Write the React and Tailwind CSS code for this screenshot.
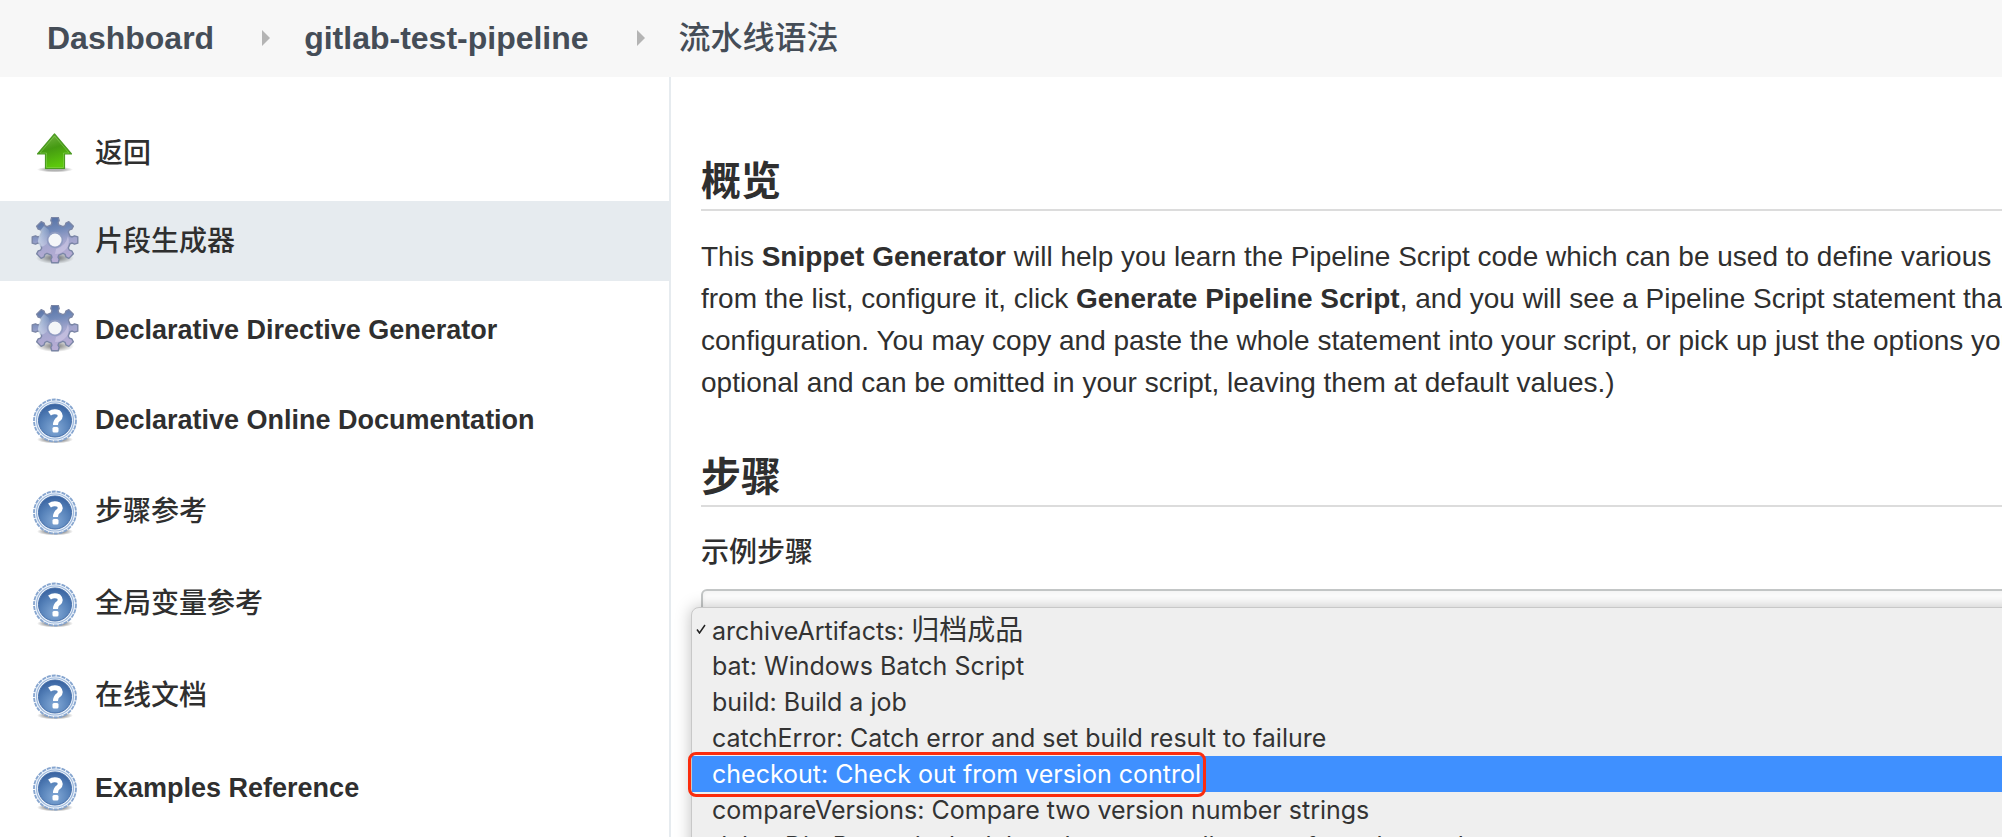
import { useState } from "react";
import clsx from "clsx";

const GEAR_POINTS = Array.from({ length: 8 })
  .flatMap((_, i) =>
    [
      [15.5, -14],
      [17.5, -10],
      [20, -12],
      [23, -8],
      [23, 8],
      [20, 12],
      [17.5, 10],
      [15.5, 14],
    ].map(([r, deg]) => {
      const a = ((i * 45 + deg) * Math.PI) / 180;
      return `${(24 + r * Math.sin(a)).toFixed(2)},${(23 - r * Math.cos(a)).toFixed(2)}`;
    }),
  )
  .join(" L");

const UpIcon = () => (
  <svg viewBox="0 0 48 48" className="size-12 shrink-0" aria-hidden="true">
    <defs>
      <linearGradient id="up-fill" x1="0" y1="0" x2="0.3" y2="1">
        <stop offset="0" stopColor="#7cb84c" />
        <stop offset="0.5" stopColor="#459a12" />
        <stop offset="1" stopColor="#5cc80c" />
      </linearGradient>
      <radialGradient id="up-shadow">
        <stop offset="0.5" stopColor="#000" stopOpacity="0.3" />
        <stop offset="1" stopColor="#000" stopOpacity="0" />
      </radialGradient>
    </defs>
    <ellipse cx="24" cy="40.500" rx="18" ry="3" fill="url(#up-shadow)" />
    <path
      d="M23.500 5 L40.500 25 H33.500 V39.500 H14.500 V25 H6.500 Z"
      fill="url(#up-fill)"
      stroke="#4b9a22"
      strokeWidth="1.200"
      strokeLinejoin="round"
    />
    <path
      d="M23.500 7 L38 24 H32.500 V38.500 H15.500 V24 H9 Z"
      fill="none"
      stroke="#8ed65c"
      strokeOpacity="0.5"
    />
  </svg>
);

const GearIcon = () => (
  <svg viewBox="0 0 48 48" className="size-12 shrink-0" aria-hidden="true">
    <defs>
      <linearGradient id="gear-fill" x1="0.4" y1="0" x2="0.6" y2="1">
        <stop offset="0" stopColor="#5671a4" />
        <stop offset="0.28" stopColor="#7189b8" />
        <stop offset="0.55" stopColor="#a3a6ce" />
        <stop offset="1" stopColor="#bcaed6" />
      </linearGradient>
      <linearGradient id="gear-shine" x1="0" y1="0" x2="1" y2="0">
        <stop offset="0" stopColor="#d3e0f0" stopOpacity="0.75" />
        <stop offset="1" stopColor="#d3e0f0" stopOpacity="0.1" />
      </linearGradient>
      <radialGradient id="gear-shadow">
        <stop offset="0.3" stopColor="#000" stopOpacity="0.4" />
        <stop offset="1" stopColor="#000" stopOpacity="0" />
      </radialGradient>
    </defs>
    <ellipse cx="24" cy="41" rx="19" ry="6" fill="url(#gear-shadow)" />
    <path
      d={`M${GEAR_POINTS} Z`}
      fill="url(#gear-fill)"
      stroke="#7b86a6"
      strokeWidth="1.400"
      strokeLinejoin="round"
    />
    <path
      d="M9 14 L13 9 L18 13 Q20 20 16.500 26 Q12 31 8 29 L7 24 Z"
      fill="url(#gear-shine)"
    />
    <path
      d="M25 32 Q35 29 37 19 Q39 25 36 31 Q31 37 24 37 Z"
      fill="#dcd5ee"
      fillOpacity="0.45"
    />
    <circle cx="24" cy="23" r="7.500" fill="none" stroke="#8f9cc0" strokeWidth="1.500" />
    <circle cx="24" cy="23" r="6.500" fill="#f4f6f8" />
  </svg>
);

const HelpIcon = () => (
  <svg viewBox="0 -3 48 48" className="size-12 shrink-0" aria-hidden="true">
    <defs>
      <radialGradient id="help-fill" cx="0.5" cy="0.75" r="0.75">
        <stop offset="0" stopColor="#83a9d6" />
        <stop offset="0.6" stopColor="#5480b8" />
        <stop offset="1" stopColor="#37619f" />
      </radialGradient>
      <radialGradient id="help-shadow">
        <stop offset="0.4" stopColor="#000" stopOpacity="0.5" />
        <stop offset="1" stopColor="#000" stopOpacity="0" />
      </radialGradient>
    </defs>
    <ellipse cx="24" cy="41.500" rx="18" ry="4" fill="url(#help-shadow)" />
    <circle cx="24" cy="22.500" r="21" fill="#eef4fb" stroke="#86a5cf" strokeWidth="1.800" strokeDasharray="4 1" />
    <circle cx="24" cy="22.500" r="18.500" fill="none" stroke="#9db8dc" strokeWidth="1.200" />
    <circle cx="24" cy="22.500" r="16.500" fill="url(#help-fill)" stroke="#466fa9" strokeWidth="1" />
    <path
      d="M18.500 15.500 Q23 12.500 27.500 14.500 Q31 18 27.500 21 Q24.500 23 24.500 27"
      fill="none"
      stroke="#fff"
      strokeWidth="5"
    />
    <rect x="21.500" y="29" width="6" height="5.500" rx="1.500" fill="#fff" />
  </svg>
);

const Chevron = () => (
  <svg viewBox="0 0 8 16" className="mr-[34px] ml-12 h-4 w-2 shrink-0" aria-hidden="true">
    <path d="M0 0 L8 8 L0 16 Z" fill="#b4b4b4" />
  </svg>
);

const tasks = [
  { label: "返回", icon: UpIcon, zh: true },
  { label: "片段生成器", icon: GearIcon, zh: true, active: true },
  { label: "Declarative Directive Generator", icon: GearIcon },
  { label: "Declarative Online Documentation", icon: HelpIcon, help: true },
  { label: "步骤参考", icon: HelpIcon, zh: true, help: true },
  { label: "全局变量参考", icon: HelpIcon, zh: true, help: true },
  { label: "在线文档", icon: HelpIcon, zh: true, help: true },
  { label: "Examples Reference", icon: HelpIcon, help: true },
];

const steps = [
  { name: "archiveArtifacts", text: "归档成品", zh: true },
  { name: "bat", text: "Windows Batch Script" },
  { name: "build", text: "Build a job" },
  { name: "catchError", text: "Catch error and set build result to failure" },
  { name: "checkout", text: "Check out from version control", marked: true },
  { name: "compareVersions", text: "Compare two version number strings" },
  {
    name: "deleteDir",
    text: "Recursively delete the current directory from the workspace",
  },
];

const Breadcrumbs = () => (
  <nav className="flex h-[77px] shrink-0 items-center bg-[#f7f7f7] px-[47px] pb-0.5 text-[32px] font-bold text-[#454d57]">
    <a href="#dashboard">Dashboard</a>
    <Chevron />
    <a href="#job">gitlab-test-pipeline</a>
    <Chevron />
    <a href="#syntax" className="font-medium">
      流水线语法
    </a>
  </nav>
);

const SidePanel = () => (
  <aside className="w-[671px] shrink-0 border-r-2 border-[#e6ebef] pt-9">
    <ul className="flex flex-col gap-2">
      {tasks.map(({ label, icon: Icon, zh, active, help }) => (
        <li key={label}>
          <a
            href="#task"
            className={clsx(
              "flex items-center gap-4 pl-[31px]",
              help ? "h-[84px]" : "h-20",
              active && "bg-[#e6ebef]",
            )}
          >
            <Icon />
            <span className={clsx("pt-0.5", zh ? "text-[28px] font-medium" : "text-[27px] font-bold")}>
              {label}
            </span>
          </a>
        </li>
      ))}
    </ul>
  </aside>
);

const SectionTitle = ({ children }) => (
  <h2 className="border-b-2 border-[#dcdcdc] pt-0.5 pb-0.5 text-[40px] leading-[52px] font-bold">
    {children}
  </h2>
);

const StepSelect = () => {
  const [selected, setSelected] = useState(0);
  const [hovered, setHovered] = useState(4);

  return (
    <div className="relative -mr-8 mt-4">
      <select
        id="step"
        value={selected}
        onChange={(e) => setSelected(Number(e.target.value))}
        className="h-16 w-full appearance-none rounded-md border-2 border-[#c3c6c6] bg-white px-3 text-transparent shadow-inner"
      >
        {steps.map((step, i) => (
          <option key={step.name} value={i}>
            {step.name}: {step.text}
          </option>
        ))}
      </select>
      <ul
        role="listbox"
        aria-label="示例步骤"
        className="absolute top-[18px] right-0 -left-[10px] rounded-tl-lg border border-[#c8c8c8] bg-[#efefef] py-1 font-['Inter','Noto_Sans_CJK_SC',sans-serif] text-[25px] leading-9 text-[#333] shadow-[0_0_16px_rgba(0,0,0,0.25)]"
      >
        {steps.map((step, i) => (
          <li
            key={step.name}
            role="option"
            aria-selected={i === selected}
            onMouseEnter={() => setHovered(i)}
            onClick={() => setSelected(i)}
            className={clsx(
              "relative h-9 pl-5 whitespace-nowrap",
              i === hovered && "bg-[#3f90ff] text-white",
            )}
          >
            {i === selected && (
              <svg viewBox="0 0 10 10" className="absolute top-3 left-1 size-[10px]" aria-hidden="true">
                <path d="M1 5.500 L3.500 9 L9 1" fill="none" stroke="#222" strokeWidth="1.500" />
              </svg>
            )}
            {step.name}:{" "}
            {step.zh ? <span className="text-[28px]">{step.text}</span> : step.text}
            {step.marked && (
              <span className="absolute -top-1 -left-1 h-[45px] w-[518px] rounded-lg border-3 border-[#fb2c0d]" />
            )}
          </li>
        ))}
      </ul>
    </div>
  );
};

const App = () => {
  return (
    <div className="flex h-screen flex-col overflow-hidden bg-white font-['Liberation_Sans','Noto_Sans_CJK_SC',sans-serif] text-[#2f2f2f]">
      <Breadcrumbs />
      <div className="flex min-h-0 flex-1">
        <SidePanel />
        <main className="min-w-0 flex-1 pt-[76px] pl-[30px]">
          <SectionTitle>概览</SectionTitle>
          <p className="mt-[25px] mb-[45px] text-[28px] leading-[42px] whitespace-nowrap">
            This <b>Snippet Generator</b> will help you learn the Pipeline
            Script code which can be used to define various
            <br />
            from the list, configure it, click <b>Generate Pipeline Script</b>,
            and you will see a Pipeline Script statement that
            <br />
            configuration. You may copy and paste the whole statement into your
            script, or pick up just the options you
            <br />
            optional and can be omitted in your script, leaving them at default
            values.)
          </p>
          <SectionTitle>步骤</SectionTitle>
          <label htmlFor="step" className="mt-[26px] block text-[28px] leading-10 font-medium">
            示例步骤
          </label>
          <StepSelect />
        </main>
      </div>
    </div>
  );
};

export default App;
